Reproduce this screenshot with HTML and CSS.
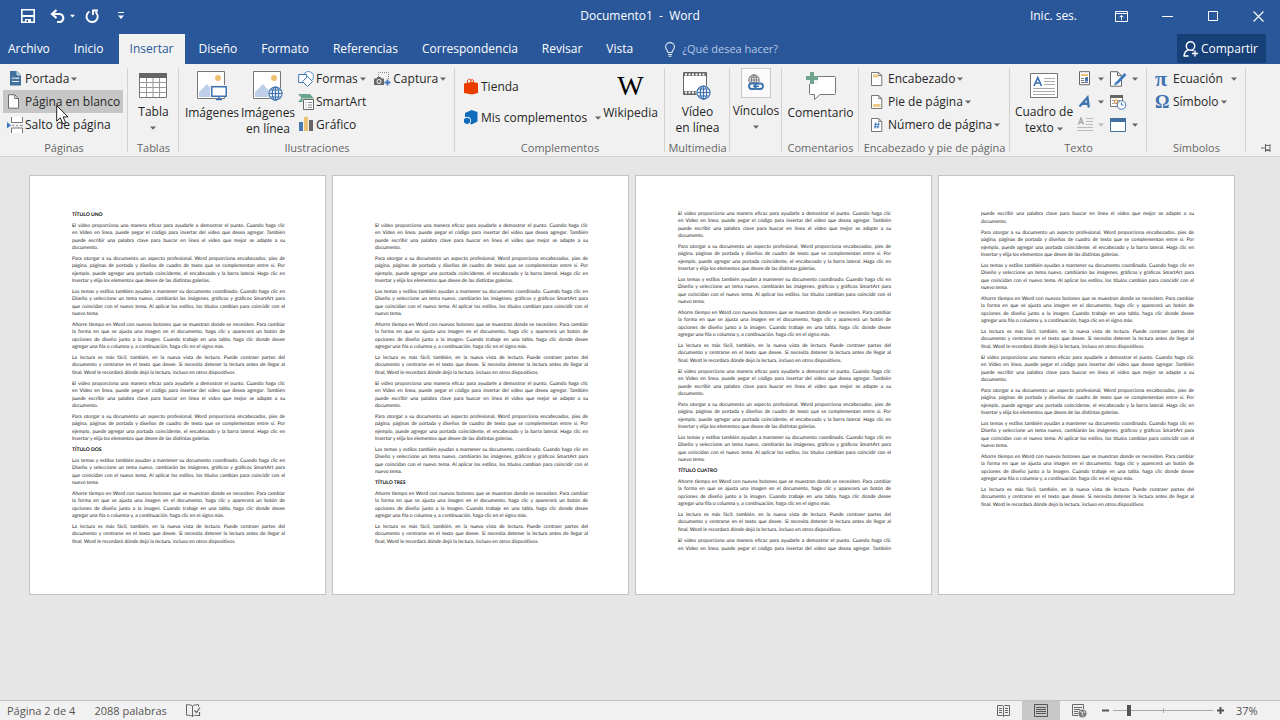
FILE: index.html
```html
<!DOCTYPE html>
<html lang="es">
<head>
<meta charset="utf-8">
<meta name="viewport" content="width=device-width, initial-scale=1">
<title>Documento1 - Word</title>
<link rel="stylesheet" href="styles.css">
</head>
<body>
<svg class="defs" aria-hidden="true">
  <symbol id="globe" viewBox="0 0 16 16"><circle cx="8" cy="8" r="7.8" fill="#f1f1f1"/><g fill="none" stroke="currentColor" stroke-width="1.2"><circle cx="8" cy="8" r="7"/><ellipse cx="8" cy="8" rx="3.4" ry="7"/><path d="M8 1v14M1 8h14M2.3 4.3h11.4M2.3 11.7h11.4"/></g></symbol>
  <symbol id="caret" viewBox="0 0 6 4"><path d="M0 .5h6L3 3.8z" fill="currentColor"/></symbol>
  <symbol id="picture" viewBox="0 0 28 28"><path d="M.5.5h27v27H.5z" fill="#fff" stroke="#777"/><circle cx="21" cy="7" r="3" fill="#edc173"/><path d="M2 26v-5l8-8 7 8v5z" fill="#bed0e9"/></symbol>
</svg>

<header class="top">
  <div class="titlebar">
    <div class="quick">
      <button class="tb save" aria-label="Guardar"><svg width="14" height="14"><path d="M.8.8h12.4v12.4H.8z" fill="none" stroke="#fff" stroke-width="1.600"/><path d="M1 6h12v2H1zM4 10h6v3.500H4z" fill="#fff"/><path d="M5.500 11h1.500v2H5.500z" fill="#2a579a"/></svg></button>
      <button class="tb undo" aria-label="Deshacer"><svg width="15" height="14"><path d="M6.500 1L2 5l4.500 4M2 5h7a4.200 3.900 0 0 1 0 8H7" fill="none" stroke="#fff" stroke-width="2.200"/></svg></button>
      <button class="tb more" aria-label="Opciones de deshacer"><svg width="5" height="4"><use href="#caret"/></svg></button>
      <button class="tb redo" aria-label="Rehacer"><svg width="14" height="15"><path d="M4.500 2.500A5.600 5.600 0 1 0 10.500 3M8 6V1.500h5" fill="none" stroke="#fff" stroke-width="1.900"/></svg></button>
      <button class="tb custom" aria-label="Personalizar barra"><svg width="6" height="8"><path d="M0 .5h6" stroke="#fff"/><path d="M0 3.500h6L3 7z" fill="#fff"/></svg></button>
    </div>
    <h1 class="doc-title">Documento1&nbsp; -&nbsp; Word</h1>
    <div class="window">
      <button class="tb signin">Inic. ses.</button>
      <button class="tb win" aria-label="Opciones de la cinta"><svg width="13" height="11"><path d="M.5.5h12v10H.5zM1 2.500h11M6.500 9V4.500M4.500 6.300l2-2 2 2" fill="none" stroke="#fff"/></svg></button>
      <button class="tb win" aria-label="Minimizar"><svg width="11" height="11"><path d="M0 5.500h11" stroke="#fff"/></svg></button>
      <button class="tb win" aria-label="Maximizar"><svg width="10" height="10"><path d="M.5.5h9v9h-9z" fill="none" stroke="#fff"/></svg></button>
      <button class="tb win close" aria-label="Cerrar"><svg width="11" height="11"><path d="M.5.5l10 10M10.500.5l-10 10" stroke="#fff" stroke-width="1.100"/></svg></button>
    </div>
  </div>
  <nav class="tabs">
    <button class="tab first">Archivo</button>
    <button class="tab">Inicio</button>
    <button class="tab active">Insertar</button>
    <button class="tab">Diseño</button>
    <button class="tab">Formato</button>
    <button class="tab">Referencias</button>
    <button class="tab">Correspondencia</button>
    <button class="tab">Revisar</button>
    <button class="tab">Vista</button>
    <button class="tab tell"><svg width="10" height="15"><path d="M3 10.500c0-2-2.400-3-2.400-5.700a4.400 4.200 0 0 1 8.800 0c0 2.700-2.400 3.700-2.400 5.700zM3 12.500h4M3.500 14.300h3" fill="none" stroke="#dfe8f6" stroke-width="1.100"/></svg><span>¿Qué desea hacer?</span></button>
    <button class="share"><svg width="16" height="16"><g fill="none" stroke="#fff" stroke-width="1.400"><circle cx="7.500" cy="5" r="4.200"/><path d="M1 15.500c.2-3.600 2-6 4.600-6.700M9.200 9l1.200 1M1 15h4.500M12 9.500v6M9 12.500h6"/></g></svg><span>Compartir</span></button>
  </nav>
</header>

<section class="ribbon" aria-label="Insertar">
  <div class="group g-pages">
    <div class="body">
      <div class="col">
        <button class="row"><svg width="18" height="15"><path d="M3 0h7l4 4v10.500H3z" fill="#41719c"/><path d="M10 0v4h4" fill="#9ebfdf" stroke="#f1f1f1" stroke-width=".8"/><path d="M5 8l1.200-1.500L7.500 8l1.300-1.500L10 8l1.200-1.500L12 8M5 10.500h7" fill="none" stroke="#fff" stroke-width=".9"/></svg><span>Portada</span><svg class="caret" width="6" height="4"><use href="#caret"/></svg></button>
        <button class="row hot"><svg width="18" height="15"><path d="M1.500.8h6.300L11.500 4.500v9.700h-10z" fill="#fff" stroke="#6b6b6b"/><path d="M7.800.8v3.700h3.700" fill="none" stroke="#6b6b6b"/></svg><span>Página en blanco</span></button>
        <button class="row"><svg width="18" height="16"><path d="M4.500 0v5.500h11V0M4.500 16v-5h11v5" fill="#fff" stroke="#777"/><path d="M5 8.500h2M9 8.500h2M13 8.500h3" stroke="#999"/><path d="M0 5l4 3.200L0 11.500z" fill="#3e78bd"/></svg><span>Salto de página</span></button>
      </div>
    </div>
    <h2>Páginas</h2>
  </div>
  <div class="group g-tables">
    <div class="body">
      <button class="big"><span class="ico"><svg width="28" height="25"><path d="M.5.5h27v24H.5z" fill="#fff" stroke="#777"/><path d="M0 0h28v5H0z" fill="#666"/><path d="M1 9.500h26M1 14.500h26M1 19.500h26M7.500 5v19M14 5v19M20.500 5v19" stroke="#999"/></svg></span><span>Tabla</span><svg class="caret" width="6" height="16" viewBox="0 -6 6 16"><path d="M0 .5h6L3 3.800z" fill="currentColor"/></svg></button>
    </div>
    <h2>Tablas</h2>
  </div>
  <div class="group g-illus">
    <div class="body">
      <button class="big b-img"><span class="ico"><svg width="30" height="30"><use href="#picture" width="28" height="28"/><path d="M13 14h17v12H13z" fill="#f1f1f1"/><path d="M14.800 15.700h14.400v9.600H14.800z" fill="#fff" stroke="#3e73b1" stroke-width="1.500"/><path d="M19 28.500h6M22 26v3" stroke="#3e73b1" stroke-width="1.500"/></svg></span><span>Imágenes</span></button>
      <button class="big b-online"><span class="ico"><svg class="blue" width="30" height="30"><use href="#picture" width="28" height="28"/><use href="#globe" x="15" y="15" width="15" height="15"/></svg></span><span>Imágenes<br>en línea</span></button>
      <div class="col">
        <button class="row"><svg width="18" height="16"><circle cx="10.500" cy="5.500" r="5" fill="#fff" stroke="#5b93cf"/><path d="M.7 3.500h8v8h-8z" fill="#fff" stroke="#4277b5"/><path d="M9.500 5.500l5 5-5 5-5-5z" fill="#fff" stroke="#4277b5"/></svg><span>Formas</span><svg class="caret" width="6" height="4"><use href="#caret"/></svg></button>
        <button class="row"><svg width="18" height="16"><path d="M0 0h12l4 4.500L12 8H0l3.500-4z" fill="#6aa58c"/><path d="M4.500 4.500h12v12h-12z" fill="#f1f1f1"/><path d="M5.500 5.500h10v10h-10z" fill="#fff" stroke="#666"/><path d="M7.500 8.500h1M10 8.500h4M7.500 11h1M10 11h4M7.500 13.300h1M10 13.300h4" stroke="#888"/></svg><span>SmartArt</span></button>
        <button class="row"><svg width="18" height="15"><path d="M1 5h4v9H1z" fill="#4a78b0"/><path d="M6 0h4v14H6z" fill="#edc173"/><path d="M11 3h4v11h-4z" fill="#666"/></svg><span>Gráfico</span></button>
      </div>
      <div class="col">
        <button class="row"><svg width="19" height="16"><path d="M4.500 6V1.500h10V8" fill="none" stroke="#888" stroke-dasharray="1 1"/><path d="M0 7.500h2.500L3.500 6h3l1 1.500H10V14H0z" fill="#666"/><circle cx="5" cy="10.500" r="2" fill="none" stroke="#fff"/><path d="M13.500 8.500v6M10.500 11.500h6" stroke="#3e78bd" stroke-width="1.800"/></svg><span>Captura</span><svg class="caret" width="6" height="4"><use href="#caret"/></svg></button>
      </div>
    </div>
    <h2>Ilustraciones</h2>
  </div>
  <div class="group g-addins">
    <div class="body">
      <div class="col wide">
        <button class="row"><svg width="16" height="17"><path d="M1 5.500L9 4l6 1v10l-6 1.500L1 15z" fill="#eb3c00"/><path d="M4.500 6V3C4.500 1 7.500 .5 8 2.500V5M7.500 2.500c1-1.500 3-1 3 .5v2" fill="none" stroke="#eb3c00"/></svg><span>Tienda</span></button>
        <button class="row"><svg width="16" height="16"><path d="M8.500 0l6 2v9.500l-6 3-5-3V9L2 7.500V3z" fill="#0f6cbd"/><circle cx="4" cy="10.800" r="4" fill="#f1f1f1"/><path d="M4 7.500l3 1.500v3.500L4 14.200 1 12.500V9z" fill="#0f6cbd"/></svg><span>Mis complementos</span><svg class="caret far" width="6" height="4"><use href="#caret"/></svg></button>
      </div>
      <button class="big"><span class="ico wiki" aria-hidden="true">W</span><span>Wikipedia</span></button>
    </div>
    <h2>Complementos</h2>
  </div>
  <div class="group g-media">
    <div class="body">
      <button class="big"><span class="ico"><svg class="blue" width="28" height="28"><path d="M.5.5h23v22H.5z" fill="#fff" stroke="#666"/><path d="M1 2.500h22M1 20.500h12" stroke="#666" stroke-width="3"/><path d="M2 2.500h21M2 20.500h12" stroke="#fff" stroke-width="2" stroke-dasharray="2 1.500"/><use href="#globe" x="13" y="13" width="15" height="15"/></svg></span><span>Vídeo<br>en línea</span></button>
    </div>
    <h2>Multimedia</h2>
  </div>
  <div class="group g-links">
    <div class="body">
      <button class="big links"><span class="ico"><svg width="18" height="18"><g color="#777"><use href="#globe" x="1" y="0" width="12" height="12"/></g><g fill="#fafafa" stroke="#3e73b1" stroke-width="1.900"><rect x="2" y="9.500" width="8" height="5.500" rx="2.700"/><rect x="8" y="9.500" width="8" height="5.500" rx="2.700"/></g><path d="M6 12.300h6" stroke="#3e73b1" stroke-width="1.500"/></svg></span><span>Vínculos</span><svg class="caret" width="6" height="16" viewBox="0 -6 6 16"><path d="M0 .5h6L3 3.800z" fill="currentColor"/></svg></button>
    </div>
  </div>
  <div class="group g-comments">
    <div class="body">
      <button class="big"><span class="ico"><svg width="30" height="29"><path d="M3.500 5.500q0-1 1-1h24q1 0 1 1v16q0 1-1 1H14l-5.500 5v-5h-4q-1 0-1-1z" fill="#fff" stroke="#777"/><path d="M0 0h12v12H0z" fill="#f1f1f1"/><path d="M6 0v12M0 6h12" stroke="#6fa58f" stroke-width="4"/></svg></span><span>Comentario</span></button>
    </div>
    <h2>Comentarios</h2>
  </div>
  <div class="group g-header">
    <div class="body">
      <div class="col">
        <button class="row"><svg width="17" height="14"><path d="M.5.5h7.300l3 3v10H.5z" fill="#fff" stroke="#777"/><path d="M2 2.500h5.500v3H2z" fill="#edc98a"/><path d="M7.800.5v3h3" fill="none" stroke="#777"/></svg><span>Encabezado</span><svg class="caret" width="6" height="4"><use href="#caret"/></svg></button>
        <button class="row"><svg width="17" height="14"><path d="M.5.5h7.300l3 3v10H.5z" fill="#fff" stroke="#777"/><path d="M2 9h7.500v3H2z" fill="#edc98a"/><path d="M7.800.5v3h3" fill="none" stroke="#777"/></svg><span>Pie de página</span><svg class="caret" width="6" height="4"><use href="#caret"/></svg></button>
        <button class="row"><svg width="17" height="14"><path d="M.5.5h7.300l3 3v10H.5z" fill="#fff" stroke="#777"/><path d="M5 4.500l-1 6M7.700 4.500l-1 6M3 6.300h5.700M2.700 8.800h5.700" stroke="#3e78bd"/><path d="M7.800.5v3h3" fill="none" stroke="#777"/></svg><span>Número de página</span><svg class="caret" width="6" height="4"><use href="#caret"/></svg></button>
      </div>
    </div>
    <h2>Encabezado y pie de página</h2>
  </div>
  <div class="group g-text">
    <div class="body">
      <button class="big"><span class="ico"><svg width="28" height="25"><path d="M.5.5h27v24H.5z" fill="#fff" stroke="#777"/><path d="M4 13L7.800 4.500 11.500 13M5.500 10h4.700" fill="none" stroke="#3e73b1" stroke-width="1.700"/><path d="M14 5.500h11M14 8.500h11M14 11.500h11M3 15.500h22M3 18.500h22M3 21.500h22" stroke="#aaa"/></svg></span><span>Cuadro de<br>texto <svg class="caret" width="6" height="4"><use href="#caret"/></svg></span></button>
      <div class="minis">
        <button class="mini" aria-label="Elementos rápidos"><svg width="16" height="15"><path d="M2.500.7h10v13h-10z" fill="#fff" stroke="#666"/><path d="M4 3h7v2H4z" fill="#edc173"/><path d="M4 7.500h3M4 9.500h3M4 11.500h7M8.500 6.500H11" stroke="#777"/><path d="M8 7h3v3.500H8z" fill="#3e73b1"/></svg><svg class="caret" width="6" height="4"><use href="#caret"/></svg></button>
        <button class="mini" aria-label="Línea de firma"><svg width="18" height="16"><path d="M.5.700h7l4 4v10.500H.5z" fill="#fff" stroke="#666"/><path d="M7.500.7v4h4" fill="none" stroke="#666"/><path d="M15.500 3L7 12" stroke="#3e78bd" stroke-width="2.600"/><path d="M4 14.500l1.500-4L8 13z" fill="#3e78bd"/></svg><svg class="caret" width="6" height="4"><use href="#caret"/></svg></button>
        <button class="mini" aria-label="WordArt"><svg width="16" height="14"><path d="M2.500 11.500L10.500 2.500l1.300 10M5.500 8.500l6 .3" fill="none" stroke="#3e73b1" stroke-width="2.300"/></svg><svg class="caret" width="6" height="4"><use href="#caret"/></svg></button>
        <button class="mini" aria-label="Fecha y hora"><svg width="18" height="16"><path d="M.5 1.500h12v11H.5z" fill="#fff" stroke="#777"/><path d="M0 1h13v3H0z" fill="#666"/><path d="M2 6.500h9M2 9.500h9" stroke="#999" stroke-dasharray="2 1"/><path d="M4.500 6h3v3h-3z" fill="#fff" stroke="#e08a3c"/><circle cx="11.500" cy="11" r="4.300" fill="#fff" stroke="#3e73b1"/><path d="M11.500 8.500V11h2" fill="none" stroke="#3e73b1"/></svg></button>
        <button class="mini off" aria-label="Letra capital"><svg width="16" height="16"><path d="M1.500 7.500L4 1l2.500 6.500M2.500 5.500h3" fill="none" stroke="#aaa" stroke-width="1.400"/><path d="M9 1.500h7M9 4.500h7M9 7.500h7M0 10.500h16M0 13.500h16" stroke="#bbb"/></svg><svg class="caret" width="6" height="4"><use href="#caret"/></svg></button>
        <button class="mini" aria-label="Objeto"><svg width="18" height="14"><path d="M.5.500h15v13H.5z" fill="#fff" stroke="#41719c"/><path d="M0 0h16v4H0z" fill="#41719c"/></svg><svg class="caret" width="6" height="4"><use href="#caret"/></svg></button>
      </div>
    </div>
    <h2>Texto</h2>
  </div>
  <div class="group g-symbols">
    <div class="body">
      <div class="col">
        <button class="row"><span class="glyph pi" aria-hidden="true">π</span><span>Ecuación</span><svg class="caret far" width="6" height="4"><use href="#caret"/></svg></button>
        <button class="row"><span class="glyph" aria-hidden="true">Ω</span><span>Símbolo</span><svg class="caret" width="6" height="4"><use href="#caret"/></svg></button>
      </div>
    </div>
    <h2>Símbolos</h2>
  </div>
  <button class="pin" aria-label="Anclar la cinta"><svg width="11" height="8"><path d="M0 4h4M4.500 0v8M5 1.500h3.500M5 5.800h3.500M9 0v8M5 6.500h4" fill="none" stroke="#666"/></svg></button>
</section>

<main class="canvas" id="canvas"></main>

<footer class="status">
  <span class="page-no">Página 2 de 4</span>
  <span class="words">2088 palabras</span>
  <button class="proof" aria-label="Revisión"><svg width="15" height="13"><path d="M6.500 2v10.500M6.500 2C5 .7 3 .7.5.7v10.500c2.500 0 4.500 0 6 1.300 1.500-1.300 2.500-1.300 3-1.300M6.500 2C8 .7 10 .7 12.500.7v2" fill="none" stroke="#666"/><path d="M8.500 6.500l2 2L14 3.500M9.500 11.500h4V8" fill="none" stroke="#666" stroke-width="1.200"/></svg></button>
  <div class="status-right">
    <button class="view" aria-label="Modo de lectura"><svg width="13" height="12"><path d="M6.500 1.500v10M.5.500h5l1 1 1-1h5v10h-5l-1 1-1-1h-5z" fill="none" stroke="#666"/><path d="M2 3.500h3M2 5.500h3M2 7.500h3M8 3.500h3M8 5.500h3M8 7.500h3" stroke="#666"/></svg></button>
    <button class="view on" aria-label="Diseño de impresión"><svg width="14" height="13"><path d="M.5.500h13v12H.5z" fill="none" stroke="#555"/><path d="M2 3.500h10M2 5.500h10M2 7.500h10M2 9.500h10" stroke="#555"/></svg></button>
    <button class="view" aria-label="Diseño web"><svg width="15" height="14"><path d="M6 11.500H.5V.5h11V5" fill="none" stroke="#666"/><path d="M2 3.500h8M2 5.500h6M2 7.500h4M2 9.500h4" stroke="#666"/><circle cx="10.500" cy="9.500" r="4" fill="#777"/><path d="M8 7.500l3 1-1 2 2 2M12 6.500l1 2.500" fill="none" stroke="#eee" stroke-width=".9"/></svg></button>
    <button class="step" aria-label="Reducir"><svg width="7" height="7"><path d="M0 3.500h7" stroke="#555" stroke-width="2"/></svg></button>
    <input class="zoom" type="range" min="10" max="190" value="37" aria-label="Zoom">
    <button class="step" aria-label="Ampliar"><svg width="7" height="7"><path d="M0 3.500h7M3.500 0v7" stroke="#555" stroke-width="2"/></svg></button>
    <span class="percent">37%</span>
  </div>
</footer>

<svg class="pointer" width="14" height="21" aria-hidden="true"><path d="M.7.700v15.500l3.600-3.400 2.500 6 2.800-1.200-2.500-5.700h4.900z" fill="#fff" stroke="#222"/></svg>
<script src="document.js"></script>
</body>
</html>
```

FILE: styles.css
```css
* { box-sizing: border-box; }
body {
  margin: 0;
  min-height: 100vh;
  display: flex;
  flex-direction: column;
  background: #e6e6e6;
  color: #262626;
  font: 12px/16px "Open Sans", "Noto Sans", sans-serif;
}
button {
  margin: 0;
  padding: 0;
  border: 0;
  background: none;
  color: inherit;
  font: inherit;
  white-space: nowrap;
}
svg { display: block; flex: none; }
.defs { position: absolute; width: 0; height: 0; }
.blue { color: #3e73b1; }
.caret { color: #666; }

/* Title bar and tabs */
.top { background: #2a579a; color: #fff; }
.titlebar {
  display: grid;
  grid-template-columns: 1fr auto 1fr;
  align-items: center;
  height: 32px;
}
.tb { display: flex; align-items: center; justify-content: center; }
.quick { display: flex; align-items: center; padding-left: 21px; }
.undo { margin-left: 15px; }
.more { margin-left: 5px; }
.redo { margin-left: 10px; }
.custom { margin-left: 19px; }
.doc-title { margin: 0; font-size: 12px; font-weight: 400; }
.window { display: flex; align-items: center; justify-content: flex-end; height: 28px; }
.signin { margin-right: 21px; }
.win { width: 46px; height: 28px; }
.win.close { width: 44px; }
.tabs { display: flex; height: 32px; padding-top: 2px; }
.tab { padding: 0 12px; }
.tab.first { padding-left: 8px; }
.tab.active { background: #f1f1f1; color: #2a579a; padding: 0 11px; margin: 0 2px 0 3px; }
.tell { display: flex; align-items: center; gap: 7px; margin-left: 8px; color: #b4c7e5; font-size: 11px; }
.share {
  display: flex;
  align-items: center;
  gap: 2px;
  height: 29px;
  margin: 0 14px 0 auto;
  padding: 0 8px 0 6px;
  background: #173f78;
}

/* Ribbon */
.ribbon {
  display: flex;
  height: 93px;
  padding-top: 3px;
  background: #f1f1f1;
  border-bottom: 1px solid #d2d2d2;
}
.group { position: relative; flex: none; display: flex; flex-direction: column; }
.group::after {
  content: "";
  position: absolute;
  top: 1px;
  right: 0;
  bottom: 4px;
  width: 1px;
  background: #d2d2d2;
}
.group h2 {
  margin: 4px 0 0;
  color: #666;
  font-size: 11px;
  font-weight: 400;
  line-height: 16px;
  text-align: center;
  white-space: nowrap;
}
.body { display: flex; height: 69px; }
.col { display: flex; flex-direction: column; align-items: flex-start; }
.row { display: flex; align-items: center; height: 23px; }
.row .caret { margin-left: 2px; }
.big { display: flex; flex-direction: column; align-items: center; padding-top: 4px; }
.big > span { text-align: center; }
.ico { display: flex; align-items: center; justify-content: center; height: 30px; margin-bottom: 4px; }
.big .caret { display: inline-block; vertical-align: middle; }

.g-pages { width: 128px; }
.g-pages .row { padding: 0 3px 0 4px; margin-left: 3px; }
.hot { background: #c6c6c6; }
.g-tables { width: 51px; }
.g-tables .body, .g-media .body, .g-links .body, .g-comments .body { justify-content: center; }
.g-illus { width: 276px; }
.b-img, .b-online { width: 56px; }
.b-img { margin-left: 5px; }
.g-illus .col { padding-left: 2px; }
.g-illus .col + .col { padding-left: 8px; }
.g-addins { width: 210px; }
.wide { padding: 8px 2px 0 8px; gap: 8px; }
.wide .row svg:first-child { margin-right: 2px; }
.row .far { margin-left: 8px; }
.wiki { font: 28px/30px "Liberation Serif", serif; color: #000; }
.g-media { width: 65px; }
.g-links { width: 52px; }
.links { padding-top: 1px; }
.links .ico { width: 30px; border: 1px solid #c9c9c9; background: #fafafa; margin-bottom: 5px; }
.g-comments { width: 77px; }
.g-header { width: 151px; }
.g-header .col { padding-left: 12px; }
.g-text { width: 137px; }
.g-text .big { width: 56px; margin-left: 6px; }
.minis { display: grid; grid-template-columns: 33px 34px; grid-auto-rows: 23px; margin-left: 5px; }
.mini { display: flex; align-items: center; justify-content: space-between; padding-right: 6px; }
.off .caret { color: #bbb; }
.g-symbols { width: 99px; }
.g-symbols .col { padding-left: 8px; }
.glyph { width: 18px; color: #3e73b1; font: bold 18px/20px "Liberation Serif", serif; text-align: left; }
.glyph.pi { font-size: 22px; }
.pin { align-self: flex-end; margin: 0 8px 4px auto; }

/* Document pages */
.canvas { flex: 1; display: flex; align-items: flex-start; gap: 6px; padding: 18px 29px; }
.sheet {
  flex: none;
  width: 297px;
  min-height: 420px;
  padding: 35px 40px 32px 42px;
  border: 1px solid #c3c3c3;
  background: #fff;
  color: #222;
  font: 5px/7px Lato, sans-serif;
  text-rendering: geometricPrecision;
}
.sheet h3, .sheet p { margin: 0 0 4px; font-size: 5px; line-height: 7px; }
.sheet h3 { color: #000; font-weight: 700; }
.sheet h3:first-child { padding-top: 1px; }
.line { display: block; min-height: 7px; white-space: nowrap; text-align: justify; text-align-last: justify; }
.line:nth-child(3), .line:nth-child(2):last-child { padding-top: 1px; }
.line:only-child { min-height: 8px; }
.line.end { text-align-last: left; }

/* Status bar */
.status {
  display: flex;
  align-items: center;
  height: 20px;
  padding-left: 7px;
  background: #f1f1f1;
  border-top: 1px solid #c3c3c3;
  color: #555;
  font-size: 11px;
}
.words { margin-left: 19px; }
.proof { margin-left: 19px; }
.status-right { display: flex; align-items: center; height: 19px; margin-left: auto; }
.view { display: flex; align-items: center; justify-content: center; width: 38px; height: 19px; }
.view.on { background: #c8c8c8; }
.step { margin: 0 4px; }
.zoom {
  appearance: none;
  width: 100px;
  height: 12px;
  margin: 0;
  background:
    linear-gradient(#aaa, #aaa) 50% 50% / 1px 5px no-repeat,
    linear-gradient(#aaa, #aaa) 50% 50% / 100% 1px no-repeat;
}
.zoom::-webkit-slider-thumb { appearance: none; width: 4px; height: 11px; background: #555; }
.percent { width: 52px; padding-left: 8px; }

.pointer { position: absolute; left: 56px; top: 105px; }
```

FILE: document.js
```js
// Body paragraphs, one array entry per typeset line.
const text = {
  video: [
    "El vídeo proporciona una manera eficaz para ayudarle a demostrar el punto. Cuando haga clic",
    "en Vídeo en línea, puede pegar el código para insertar del vídeo que desea agregar. También",
    "puede escribir una palabra clave para buscar en línea el vídeo que mejor se adapte a su",
    "documento."
  ],
  cover: [
    "Para otorgar a su documento un aspecto profesional, Word proporciona encabezados, pies de",
    "página, páginas de portada y diseños de cuadro de texto que se complementan entre sí. Por",
    "ejemplo, puede agregar una portada coincidente, el encabezado y la barra lateral. Haga clic en",
    "Insertar y elija los elementos que desee de las distintas galerías."
  ],
  themes: [
    "Los temas y estilos también ayudan a mantener su documento coordinado. Cuando haga clic en",
    "Diseño y seleccione un tema nuevo, cambiarán las imágenes, gráficos y gráficos SmartArt para",
    "que coincidan con el nuevo tema. Al aplicar los estilos, los títulos cambian para coincidir con el",
    "nuevo tema."
  ],
  save: [
    "Ahorre tiempo en Word con nuevos botones que se muestran donde se necesiten. Para cambiar",
    "la forma en que se ajusta una imagen en el documento, haga clic y aparecerá un botón de",
    "opciones de diseño junto a la imagen. Cuando trabaje en una tabla, haga clic donde desee",
    "agregar una fila o columna y, a continuación, haga clic en el signo más."
  ],
  reading: [
    "La lectura es más fácil, también, en la nueva vista de lectura. Puede contraer partes del",
    "documento y centrarse en el texto que desee. Si necesita detener la lectura antes de llegar al",
    "final, Word le recordará dónde dejó la lectura, incluso en otros dispositivos."
  ],
  blank: [""]
};
text.videoStart = text.video.slice(0, 2);
text.videoEnd = text.video.slice(2);

const pages = [
  ["#TÍTULO UNO", "video", "cover", "themes", "save", "reading", "video", "cover",
   "#TÍTULO DOS", "themes", "save", "reading"],
  ["blank", "video", "cover", "themes", "save", "reading", "video", "cover", "themes",
   "#TÍTULO TRES", "save", "reading"],
  ["video", "cover", "themes", "save", "reading", "video", "cover", "themes",
   "#TÍTULO CUATRO", "save", "reading", "videoStart"],
  ["videoEnd", "cover", "themes", "save", "reading", "video", "cover", "themes",
   "save", "reading"]
];

const canvas = document.getElementById("canvas");
for (const page of pages) {
  const sheet = document.createElement("article");
  sheet.className = "sheet";
  for (const key of page) {
    if (key[0] === "#") {
      const heading = document.createElement("h3");
      heading.textContent = key.slice(1);
      sheet.append(heading);
      continue;
    }
    const paragraph = document.createElement("p");
    text[key].forEach((content, i) => {
      const line = document.createElement("span");
      const last = i === text[key].length - 1 && key !== "videoStart";
      line.className = last ? "line end" : "line";
      line.textContent = content + " ";
      paragraph.append(line);
    });
    sheet.append(paragraph);
  }
  canvas.append(sheet);
}
```
